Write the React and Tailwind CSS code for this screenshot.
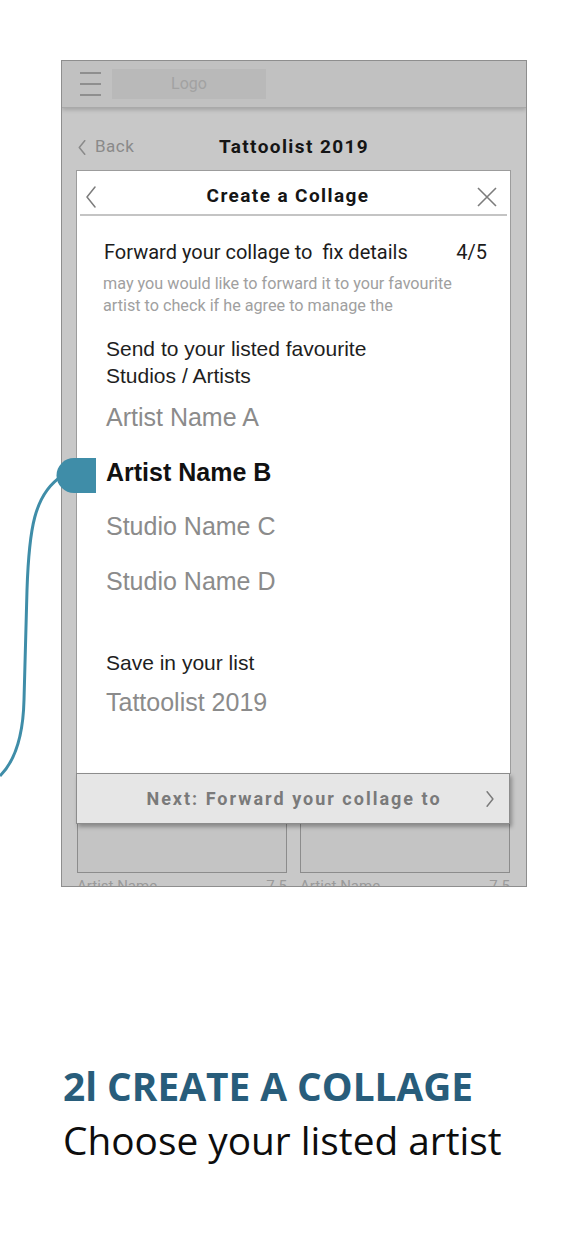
import React from "react";

const roboto = "font-['Roboto',sans-serif]";
const arial = "font-['Liberation_Sans',Arial,sans-serif]";

function Chevron({ dir = "left", className = "", stroke = "#7a7a7a", width = 1.6 }) {
  const d = dir === "left" ? "M10 1 L2 11 L10 21" : "M2 1 L10 11 L2 21";
  return (
    <svg viewBox="0 0 12 22" className={className} fill="none">
      <path d={d} stroke={stroke} strokeWidth={width} strokeLinecap="round" strokeLinejoin="round" />
    </svg>
  );
}

function Connector() {
  return (
    <svg className="absolute left-0 top-0 pointer-events-none" width="120" height="800" viewBox="0 0 120 800" fill="none">
      <path
        d="M62 476 C34 494, 29 530, 27 590 L24 700 C23 742, 12 764, 0 776"
        stroke="#3f8da8"
        strokeWidth="3"
        fill="none"
      />
      <path d="M74 458 L96 458 L96 493 L74 493 A17.5 17.5 0 0 1 74 458 Z" fill="#3f8da8" />
    </svg>
  );
}

const names = [
  { label: "Artist Name A", active: false },
  { label: "Artist Name B", active: true },
  { label: "Studio Name C", active: false },
  { label: "Studio Name D", active: false },
];

export default function App() {
  return (
    <div className="relative w-[587px] h-[1260px] bg-white overflow-hidden">
      <div className="pt-[60px]">
        <div className="ml-[61px] w-[466px] h-[827px] border border-[#8e8e8e] bg-[#c8c8c8] overflow-hidden flex flex-col">
          {/* top bar */}
          <div className="h-[47px] shrink-0 flex items-center pl-[18px] bg-[#c1c1c1] border-b border-[#a9a9a9] shadow-[0_2px_4px_rgba(0,0,0,0.18)]">
            <div className="flex flex-col gap-[9px] w-[21px]">
              <div className="h-[2px] bg-[#8f8f8f]" />
              <div className="h-[2px] bg-[#8f8f8f]" />
              <div className="h-[2px] bg-[#8f8f8f]" />
            </div>
            <div className={`ml-[11px] w-[154px] h-[30px] bg-[#b9b9b9] flex items-center justify-center text-[16px] text-[#a2a2a2] ${roboto}`}>
              Logo
            </div>
          </div>

          {/* title row */}
          <div className={`h-[62px] shrink-0 pt-[28px] grid grid-cols-[1fr_auto_1fr] pl-[15px] ${roboto}`}>
            <div className="flex items-center h-[22px] text-[17px] tracking-[0.5px] text-[#8a8a8a]">
              <Chevron className="w-[10px] h-[15px] mr-[8px]" stroke="#8a8a8a" width={2.2} />
              Back
            </div>
            <div className="h-[22px] leading-[22px] text-[19px] font-bold tracking-[1.4px] text-[#151515] -ml-[15px]">
              Tattoolist 2019
            </div>
            <div />
          </div>

          {/* modal */}
          <div className="ml-[14px] w-[435px] h-[604px] shrink-0 bg-white border border-[#9c9c9c] flex flex-col">
            <div className={`h-[43px] pt-[8px] flex items-center justify-between pl-[8px] pr-[13px] ${roboto}`}>
              <Chevron className="w-[12px] h-[22px]" stroke="#7c7c7c" width={1.5} />
              <div className="text-[19px] font-bold tracking-[1.4px] text-[#151515] ml-[2px]">Create a Collage</div>
              <svg viewBox="0 0 20 20" className="w-[20px] h-[20px]" fill="none">
                <path d="M1 1 L19 19 M19 1 L1 19" stroke="#7c7c7c" strokeWidth="1.6" />
              </svg>
            </div>
            <div className="mx-[3px] h-[2px] bg-[#c4c4c4]" />

            <div className={`mt-[24px] pl-[27px] pr-[23px] flex justify-between text-[20px] leading-[24px] text-[#1c1c1c] ${roboto}`}>
              <span className="whitespace-pre">Forward your collage to  fix details</span>
              <span>4/5</span>
            </div>
            <div className={`mt-[9px] pl-[26px] text-[16.2px] leading-[22px] text-[#a0a0a0] whitespace-nowrap ${roboto}`}>
              may you would like to forward it to your favourite
              <br />
              artist to check if he agree to manage the
            </div>

            <div className={`pl-[29px] ${arial}`}>
              <div className="mt-[18px] text-[21px] leading-[27px] text-[#1e1e1e]">
                Send to your listed favourite
                <br />
                Studios / Artists
              </div>
              <div className="mt-[1px] flex flex-col">
                {names.map((n) => (
                  <div
                    key={n.label}
                    className={`text-[25px] leading-[54.5px] ${n.active ? "font-bold text-[#111]" : "text-[#8b8b8b]"}`}
                  >
                    {n.label}
                  </div>
                ))}
              </div>
              <div className="mt-[41px] text-[21px] leading-[27px] text-[#1e1e1e]">Save in your list</div>
              <div className="mt-[6px] text-[25px] leading-[40px] text-[#8b8b8b]">Tattoolist 2019</div>
            </div>
          </div>

          {/* next bar */}
          <div className={`relative z-10 -mt-[1px] ml-[14px] w-[434px] h-[51px] shrink-0 bg-[#e6e6e6] border border-[#8c8c8c] shadow-[2px_3px_4px_rgba(0,0,0,0.3)] flex items-center pr-[14px] ${roboto}`}>
            <div className="flex-1 text-center pl-[26px] text-[18px] font-bold tracking-[2px] text-[#7a7a7a]">
              Next: Forward your collage to
            </div>
            <Chevron dir="right" className="w-[10px] h-[16px]" stroke="#7a7a7a" width={2} />
          </div>

          {/* background cards */}
          <div className="ml-[15px] flex gap-[13px] shrink-0">
            <div className="w-[210px] h-[49px] bg-[#c4c4c4] border border-t-0 border-[#8c8c8c]" />
            <div className="w-[210px] h-[49px] bg-[#c4c4c4] border border-t-0 border-[#8c8c8c]" />
          </div>
          <div className={`ml-[15px] mt-[4px] flex gap-[13px] text-[15px] leading-[18px] text-[#9a9a9a] ${roboto}`}>
            <div className="w-[210px] flex justify-between">
              <span>Artist Name</span>
              <span>7.5</span>
            </div>
            <div className="w-[210px] flex justify-between">
              <span>Artist Name</span>
              <span>7.5</span>
            </div>
          </div>
        </div>

        <div className="mt-[172px] pl-[63px] font-['Open_Sans',sans-serif] text-[38.8px] leading-[54px]">
          <div className="font-bold text-[#285d7b] whitespace-nowrap">2l CREATE A COLLAGE</div>
          <div className="text-[#0d0d0d] whitespace-nowrap">Choose your listed artist</div>
        </div>
      </div>

      <Connector />
    </div>
  );
}
